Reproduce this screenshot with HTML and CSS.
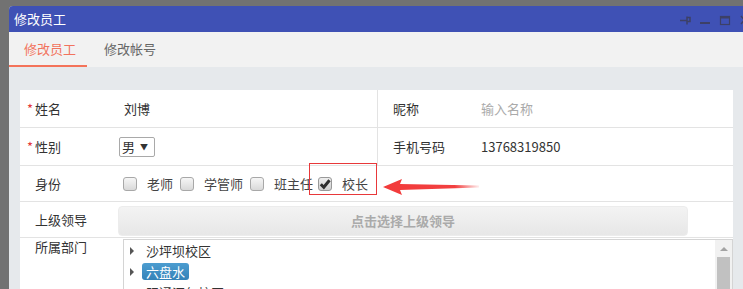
FILE: index.html
```html
<!DOCTYPE html>
<html lang="zh">
<head>
  <meta charset="UTF-8">
  <title>修改员工</title>
  <link rel="stylesheet" href="styles.css">
</head>
<body>
  <div class="window">
    <div class="titlebar">
      <span class="title">修改员工</span>
      <svg class="controls" width="70" height="26" viewBox="0 0 70 26">
        <!-- pin -->
        <path d="M2 14.5h7" stroke="#3d4066" stroke-width="1.5" fill="none"/>
        <path d="M9 10.5v8M9 11.5h3v4h-3" stroke="#3d4066" stroke-width="1.5" fill="none"/>
        <!-- minimize -->
        <path d="M22 17h10" stroke="#3d4066" stroke-width="2" fill="none"/>
        <!-- maximize -->
        <rect x="42.5" y="10.5" width="9" height="8" stroke="#3d4066" stroke-width="1.2" fill="none"/>
        <path d="M42.5 11.5h9" stroke="#3d4066" stroke-width="2"/>
        <!-- close -->
        <path d="M63 10l7 8M70 10l-7 8" stroke="#3d4066" stroke-width="1.5"/>
      </svg>
    </div>

    <div class="tabs">
      <span class="tab active">修改员工</span>
      <span class="tab">修改帐号</span>
    </div>

    <div class="content">
      <div class="card">
        <div class="row r1">
          <div class="cell label"><span class="req">*</span>姓名</div>
          <div class="cell value half">刘博</div>
          <div class="cell label side">昵称</div>
          <div class="cell value placeholder">输入名称</div>
        </div>

        <div class="row r2">
          <div class="cell label"><span class="req">*</span>性别</div>
          <div class="cell value half sel-cell">
            <span class="select">男<span class="caret">▼</span></span>
          </div>
          <div class="cell label side">手机号码</div>
          <div class="cell value">13768319850</div>
        </div>

        <div class="row r3">
          <div class="cell label">身份</div>
          <div class="cell value checks">
            <span class="cb"></span><span class="cb-text">老师</span>
            <span class="cb"></span><span class="cb-text">学管师</span>
            <span class="cb"></span><span class="cb-text last">班主任</span>
            <span class="cb checked"><svg width="12" height="12" viewBox="0 0 12 12"><path d="M1.8 6.2l3 3L10.5 2.2" stroke="#2e2e2e" stroke-width="3" fill="none"/></svg></span><span class="cb-text">校长</span>
          </div>
        </div>

        <div class="row r4">
          <div class="cell label">上级领导</div>
          <div class="cell value btn-cell">
            <span class="pick-btn">点击选择上级领导</span>
          </div>
        </div>

        <div class="row r5">
          <div class="cell label top">所属部门</div>
          <div class="tree">
            <div class="tree-list">
              <div class="node"><span class="arrow"></span><span class="node-name">沙坪坝校区</span></div>
              <div class="node"><span class="arrow"></span><span class="node-name selected">六盘水</span></div>
              <div class="node"><span class="arrow blank"></span><span class="node-name">阳通汇仁校区</span></div>
            </div>
            <div class="scrollbar">
              <span class="up"></span>
              <span class="thumb"></span>
            </div>
          </div>
        </div>

        <!-- annotation -->
        <div class="mark-box"></div>
        <svg class="mark-arrow" width="102" height="22" viewBox="0 0 102 22">
          <defs>
            <linearGradient id="fade" x1="0" y1="0" x2="1" y2="0">
              <stop offset="0" stop-color="#f23b3b"/>
              <stop offset="0.75" stop-color="#f24040"/>
              <stop offset="1" stop-color="#f24040" stop-opacity="0.1"/>
            </linearGradient>
          </defs>
          <path d="M3 11 L22 3 L20 8 L99 9.5 L99 11.5 L20 14 L22 19 Z" fill="url(#fade)"/>
        </svg>
      </div>
    </div>
  </div>
</body>
</html>
```

FILE: styles.css
```css
html, body {
  margin: 0;
  padding: 0;
}

body {
  width: 743px;
  height: 289px;
  overflow: hidden;
  background-color: #727272;
  font-family: "Microsoft YaHei", "Noto Sans CJK SC", sans-serif;
  font-size: 13px;
  color: #333;
}

.window {
  margin: 6px 0 0 9px;
  width: 740px;
  border-radius: 4px 0 0 0;
  overflow: hidden;
  background-color: #e6e9ec;
}

.titlebar {
  display: flex;
  align-items: center;
  height: 26px;
  padding-left: 5px;
  background-color: #3f51b5;
  color: #fff;
}

.title {
  line-height: 26px;
}

.controls {
  margin-left: auto;
  margin-right: 1px;
}

.tabs {
  display: flex;
  height: 35px;
  background-color: #f2f2f2;
}

.tab {
  line-height: 33px;
  padding: 0 17px 0 17px;
  color: #666;
  border-bottom: 2px solid transparent;
}

.tab.active {
  padding: 0 11px 0 15px;
  color: #f2735d;
  border-bottom-color: #f4735a;
}

.content {
  padding: 23px 0 0 11px;
  height: 300px;
}

.card {
  position: relative;
  width: 713px;
  height: 300px;
  background-color: #fff;
}

.row {
  display: flex;
  border-bottom: 1px solid #e3e3e3;
}

.r1 { height: 37px; }
.r2 { height: 37px; }
.r3 { height: 35px; }
.r4 { height: 35px; }

.cell {
  display: flex;
  align-items: center;
  box-sizing: border-box;
}

.label {
  flex: none;
  width: 98px;
  padding-left: 15px;
  color: #333;
}

.req {
  display: inline-block;
  width: 8px;
  margin-left: -8px;
  color: #e4393c;
}

.value {
  padding-left: 6px;
}

.half {
  width: 259px;
}

.label.side {
  width: 104px;
  border-left: 1px solid #e3e3e3;
}

.side + .value {
  padding-left: 0;
}

.placeholder {
  color: #aaa;
}

.sel-cell {
  padding-left: 1px;
}

.select {
  display: inline-flex;
  align-items: center;
  box-sizing: border-box;
  width: 36px;
  height: 20px;
  padding-left: 2px;
  border: 1px solid #a9a9a9;
  border-radius: 2px;
}

.caret {
  font-size: 8px;
  margin-left: 5px;
  color: #333;
}

.checks {
  padding-left: 5px;
}

.cb {
  display: inline-flex;
  align-items: center;
  justify-content: center;
  box-sizing: border-box;
  width: 14px;
  height: 14px;
  border: 1px solid #a8a8a8;
  border-radius: 3px;
  background: linear-gradient(#f6f6f6, #d9d9d9);
}

.cb.checked {
  border-color: #999;
  background: linear-gradient(#eeeeee, #cfcfcf);
}

.cb-text {
  margin: 0 7px 0 10px;
  color: #444;
}

.cb-text.last {
  margin-right: 5px;
}

.btn-cell {
  padding-left: 0;
  align-items: flex-start;
  padding-top: 4px;
}

.pick-btn {
  display: block;
  box-sizing: border-box;
  width: 570px;
  height: 30px;
  line-height: 28px;
  text-align: center;
  border: 1px solid #ececec;
  border-radius: 4px;
  background: linear-gradient(#f3f3f3, #e7e7e7);
  color: #aaa;
  font-weight: bold;
}

.r5 {
  border-bottom: none;
  height: 60px;
}

.label.top {
  align-items: flex-start;
  line-height: 18px;
}

.tree {
  display: flex;
  box-sizing: border-box;
  width: 610px;
  height: 60px;
  margin: 1px 0 0 5px;
  border: 1px solid #d4d4d4;
  border-bottom: none;
}

.tree-list {
  flex: 1;
  padding-left: 6px;
}

.node {
  display: flex;
  align-items: center;
  height: 21px;
}

.arrow {
  width: 0;
  height: 0;
  border-top: 4px solid transparent;
  border-bottom: 4px solid transparent;
  border-left: 4px solid #555;
}

.arrow.blank {
  border-left-color: transparent;
}

.node-name {
  margin-left: 8px;
  padding: 0 4px;
  height: 17px;
  line-height: 17px;
  color: #333;
}

.node-name.selected {
  border-radius: 3px;
  background: linear-gradient(#4c9dd0, #3482b8);
  color: #fff;
}

.scrollbar {
  display: flex;
  flex-direction: column;
  align-items: center;
  width: 17px;
  background-color: #f1f1f1;
}

.up {
  margin-top: 7px;
  width: 0;
  height: 0;
  border-left: 4px solid transparent;
  border-right: 4px solid transparent;
  border-bottom: 4px solid #a3a3a3;
}

.thumb {
  margin-top: 6px;
  width: 13px;
  height: 40px;
  background-color: #c1c1c1;
}

.mark-box {
  position: absolute;
  left: 289px;
  top: 73px;
  width: 66px;
  height: 30px;
  border: 1px solid #e8383a;
}

.mark-arrow {
  position: absolute;
  left: 360px;
  top: 86px;
}
```
